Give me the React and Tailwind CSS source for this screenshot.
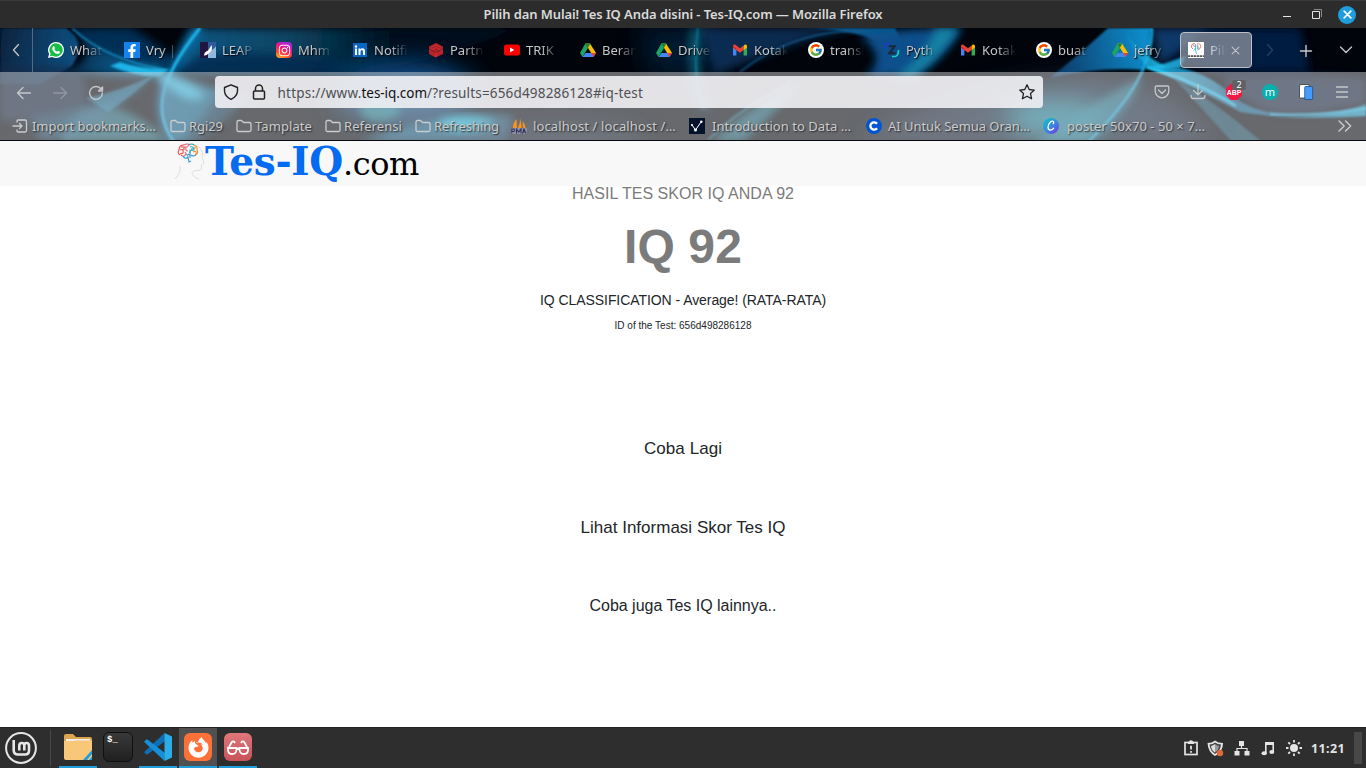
import React, { useLayoutEffect, useRef, useState } from "react";
import { FcGoogle } from "react-icons/fc";
import { FaInstagram, FaFacebookF, FaFirefoxBrowser } from "react-icons/fa";

/* Text whose letter spacing is adjusted so that it fills a given width. */
function Fit({ w, className = "", children }) {
  const ref = useRef(null);
  const [gap, setGap] = useState(0);
  useLayoutEffect(() => {
    const natural = ref.current.getBoundingClientRect().width;
    setGap((w - natural) / String(children).length);
  }, [w, children]);
  return (
    <span ref={ref} className={"inline-block shrink-0 whitespace-pre " + className} style={{ letterSpacing: gap + "px" }}>
      {children}
    </span>
  );
}

function ThemeArt() {
  return (
    <svg className="absolute inset-0 h-full w-full" viewBox="0 28 1366 112" preserveAspectRatio="none">
      <defs>
        <filter id="b1" x="-20%" y="-20%" width="140%" height="140%"><feGaussianBlur stdDeviation="1" /></filter>
        <filter id="b3" x="-30%" y="-30%" width="160%" height="160%"><feGaussianBlur stdDeviation="4" /></filter>
        <filter id="b12" x="-60%" y="-60%" width="220%" height="220%"><feGaussianBlur stdDeviation="13" /></filter>
        <linearGradient id="disc" x1="0" x2="1" y1="0" y2="0.2"><stop offset="0" stopColor="#06223d" /><stop offset="1" stopColor="#124f80" /></linearGradient>
        <linearGradient id="swoosh" gradientUnits="userSpaceOnUse" x1="75" x2="165" y1="30" y2="72"><stop offset="0" stopColor="#06345c" /><stop offset=".6" stopColor="#0f7cbd" /><stop offset="1" stopColor="#25c8fa" /></linearGradient>
        <linearGradient id="fade" gradientUnits="userSpaceOnUse" x1="190" x2="400" y1="28" y2="28"><stop offset="0" stopColor="#0b5580" /><stop offset=".5" stopColor="#08425f" /><stop offset="1" stopColor="#020c1a" /></linearGradient>
        <linearGradient id="beam" gradientUnits="userSpaceOnUse" x1="1120" x2="1366" y1="40" y2="110"><stop offset="0" stopColor="#087cba" /><stop offset=".18" stopColor="#24c6f6" /><stop offset=".5" stopColor="#166a9c" /><stop offset="1" stopColor="#1cb4e8" /></linearGradient>
        <linearGradient id="pane" gradientUnits="userSpaceOnUse" x1="1060" x2="1150" y1="60" y2="40"><stop offset="0" stopColor="#08406f" /><stop offset="1" stopColor="#0a90cf" /></linearGradient>
      </defs>
      <rect y="28" width="1366" height="112" fill="#01040b" />
      <path d="M0 28H66Q88 42 72 66L40 84H0Z" fill="url(#disc)" filter="url(#b1)" />
      <path d="M0 66H70Q92 80 86 110Q50 125 0 120Z" fill="#132c4c" opacity=".7" filter="url(#b3)" />
      <path d="M190 28H520Q420 68 340 75Q250 74 172 72Z" fill="url(#fade)" filter="url(#b3)" />
      <path d="M200 55Q270 50 340 62V74H175Z" fill="#06254e" opacity=".8" filter="url(#b3)" />
      <path d="M80 28H132Q158 44 182 66L160 70Q105 62 72 28Z" fill="#062d55" filter="url(#b3)" />
      <path d="M75 28Q105 60 165 68L158 75Q120 78 60 72Q88 66 86 50Z" fill="url(#swoosh)" opacity=".7" filter="url(#b3)" />
      <path d="M72 28Q106 60 166 70" stroke="#139ad5" strokeWidth="1.6" fill="none" filter="url(#b1)" />
      <path d="M120 62Q142 70 170 69L160 76Q140 78 110 66Z" fill="#22c4f8" opacity=".85" filter="url(#b1)" />
      <path d="M200 28Q168 68 163 96Q159 120 174 142" stroke="#0c80c0" strokeWidth="9" opacity=".65" fill="none" filter="url(#b3)" />
      <path d="M200 28Q168 68 163 96Q159 120 174 142" stroke="#1fb8ee" strokeWidth="3" fill="none" filter="url(#b1)" />
      <path d="M158 73Q195 80 222 92Q205 118 184 142H174Q158 115 162 92Z" fill="#1583b8" opacity=".75" filter="url(#b3)" />
      <path d="M152 71Q186 78 206 96Q190 106 170 88Z" fill="#37d3ff" opacity=".8" filter="url(#b3)" />
      <path d="M215 88 250 95 225 120 195 142H182Z" fill="#105783" opacity=".55" filter="url(#b3)" />
      <path d="M62 142Q60 112 106 106Q140 112 168 142Z" fill="#227d94" opacity=".75" filter="url(#b3)" />
      <path d="M30 118Q90 112 155 75Q120 108 70 140H40Z" fill="#1b5c86" opacity=".6" filter="url(#b3)" />
      <path d="M86 98Q125 90 156 74Q132 96 108 112Z" fill="#1e83b4" opacity=".6" filter="url(#b1)" />
      <ellipse cx="405" cy="92" rx="70" ry="30" fill="#0b5ba3" opacity=".85" filter="url(#b12)" />
      <ellipse cx="380" cy="109" rx="20" ry="12" fill="#1d8a9a" opacity=".8" filter="url(#b3)" />
      <path d="M360 142Q450 106 512 116Q510 138 500 142Z" fill="#1276a8" opacity=".7" filter="url(#b3)" />
      <ellipse cx="466" cy="124" rx="28" ry="7" fill="#20d9ff" opacity=".85" filter="url(#b3)" />
      <ellipse cx="555" cy="142" rx="90" ry="22" fill="#1a2f48" opacity=".6" filter="url(#b12)" />
      <path d="M640 28H720V74H650Z" fill="#04213c" opacity=".8" filter="url(#b12)" />
      <path d="M690 28H705Q693 75 710 107Q704 113 699 107Q685 72 690 28Z" fill="#127d97" opacity=".55" filter="url(#b3)" />
      <path d="M698 28Q692 75 703 108" fill="none" stroke="#1190aa" strokeWidth="2.5" opacity=".55" filter="url(#b1)" />
      <path d="M700 28H895Q850 26 800 42Q760 58 715 74Z" fill="#07335c" opacity=".85" filter="url(#b3)" />
      <path d="M795 28H895Q905 45 900 60Q880 28 795 28Z" fill="#0e6cab" opacity=".8" filter="url(#b1)" />
      <path d="M740 72Q790 32 855 31Q895 32 910 66" stroke="#125b90" strokeWidth="2" opacity=".8" fill="none" filter="url(#b1)" />
      <path d="M860 36Q905 28 962 28Q944 60 915 76H865Q890 58 860 36Z" fill="#07508c" filter="url(#b3)" />
      <path d="M936 28H959Q940 58 912 78H894Q926 56 936 28Z" fill="#128ba8" opacity=".85" filter="url(#b3)" />
      <path d="M712 142Q745 108 800 84Q778 110 742 142Z" fill="#1e7894" opacity=".75" filter="url(#b3)" />
      <path d="M708 140Q740 108 790 84" stroke="#2e9dc0" strokeWidth="2" opacity=".5" fill="none" filter="url(#b1)" />
      <path d="M860 142Q930 88 1100 75Q1190 95 1215 142Z" fill="#21385c" opacity=".65" filter="url(#b12)" />
      <path d="M1108 28H1152Q1151 54 1144 70Q1100 66 1050 78Q1080 54 1108 28Z" fill="url(#pane)" filter="url(#b1)" />
      <path d="M1152 28H1215Q1185 48 1160 66Z" fill="#073768" filter="url(#b3)" />
      <ellipse cx="1055" cy="118" rx="50" ry="18" fill="#1f8ea6" filter="url(#b12)" />
      <path d="M1035 142Q1080 112 1142 76Q1130 112 1088 142Z" fill="#238fab" opacity=".65" filter="url(#b3)" />
      <path d="M1152 28Q1154 78 1088 142" stroke="#1cb9ed" strokeWidth="2.4" opacity=".85" fill="none" filter="url(#b1)" />
      <path d="M1122 28Q1142 55 1165 66Q1205 68 1235 98Q1262 117 1310 115Q1345 112 1366 104V116Q1295 121 1240 112Q1190 84 1148 68Q1134 52 1122 28Z" fill="url(#beam)" opacity=".85" filter="url(#b1)" />
      <path d="M1146 67Q1200 83 1236 106" stroke="#2acfff" strokeWidth="2.5" fill="none" filter="url(#b1)" />
      <path d="M1270 114Q1330 116 1366 108" stroke="#2acfff" strokeWidth="2.5" fill="none" filter="url(#b1)" />
      <path d="M1222 76Q1300 72 1366 78V104Q1310 116 1275 113Q1240 104 1222 76Z" fill="#14284a" opacity=".8" filter="url(#b3)" />
      <path d="M1172 76Q1215 102 1262 142H1232Q1198 104 1172 76Z" fill="#156080" opacity=".65" filter="url(#b1)" />
      <path d="M1212 28H1300L1310 72H1215Q1185 64 1160 66Q1190 55 1212 28Z" fill="#042350" opacity=".8" filter="url(#b3)" />
      <path d="M1150 68Q1170 62 1186 56L1180 68Z" fill="#22bdf1" opacity=".8" filter="url(#b1)" />
    </svg>
  );
}

const Drive = () => (
  <svg className="h-4 w-4" viewBox="0 0 16 16">
    <path d="M5.3 1.5H10L16 11H11.2Z" fill="#fbbc04" />
    <path d="M5.3 1.5 8 6 2.5 15 0 11Z" fill="#1ea362" />
    <path d="M5.5 11H16L13.5 15H2.5Z" fill="#4285f4" />
    <path d="M11.2 11H16L13.5 15Z" fill="#ea4335" />
    <path d="M5.3 1.5H10.3L8 5.8Z" fill="#188038" />
  </svg>
);
const Gmail = () => (
  <svg className="h-4 w-4" viewBox="0 0 16 16">
    <path d="M1 4V13.5H4.4V7Z" fill="#4285f4" />
    <path d="M15 4V13.5H11.6V7Z" fill="#34a853" />
    <path d="M1 4.2Q1 2 3 2.5L8 6.3 11.6 3.6V8L8 10.8 1 5.7Z" fill="#ea4335" />
    <path d="M11.6 3.7 13 2.6Q15 2 15 4.4V5.6L11.6 8.1Z" fill="#fbbc04" />
    <path d="M1 4.2 4.4 6.7V8L1 5.6Z" fill="#c5221f" />
  </svg>
);
const Google = () => <span className="flex h-4 w-4 items-center justify-center rounded-full bg-white"><FcGoogle size={14} /></span>;
const WhatsApp = () => (
  <svg className="h-4 w-4" viewBox="0 0 16 16">
    <path d="M8 0A8 8 0 0 1 8 16Q6 16 4.2 15.1L0 16 1.1 12A8 8 0 0 1 8 0Z" fill="#fff" />
    <path d="M8 1.3A6.7 6.7 0 1 1 4.5 13.7L1.9 14.3 2.6 11.8A6.7 6.7 0 0 1 8 1.3Z" fill="#16bd47" />
    <path d="M5 4.4Q5.9 3.6 6.3 4.5L6.9 6Q6.9 6.4 6.3 7 7.4 9 9.2 9.7L10 8.8 12 9.8Q12 12 9.8 12 7.6 11.8 5.8 9.9 3.2 7 5 4.4Z" fill="#fff" />
  </svg>
);
const Facebook = () => <span className="flex h-4 w-4 items-end justify-center bg-[#1583ed] text-white"><FaFacebookF size={14} /></span>;
const Leap = () => (
  <svg className="h-4 w-4" viewBox="0 0 16 16">
    <rect width="9" height="16" rx="1" fill="#211641" /><path d="M8 0H16V16H8Z" fill="#2c5a9a" />
    <path d="M8 9Q14 8 16 4V16H8Z" fill="#8db9de" /><path d="M4 13.5Q4 10 8 8.5 10 6 11.5 3 13.5 8 8.5 11.5 6.5 14 4 13.5Z" fill="#fff" />
  </svg>
);
const Instagram = () => <span className="flex h-4 w-4 items-center justify-center rounded bg-[linear-gradient(25deg,#ffcb22_0%,#ff4b24_28%,#f21383_58%,#a926dd_85%)] text-white"><FaInstagram size={13} /></span>;
const LinkedIn = () => (
  <svg className="h-4 w-4" viewBox="0 0 16 16">
    <rect x="1" y="1" width="14" height="14" fill="#0a66c2" />
    <circle cx="4" cy="4.5" r="1.2" fill="#fff" />
    <path d="M3 6.5H5V13H3ZM6.5 6.5H8.4V7.5Q9 6.3 10.6 6.3 13 6.3 13 9.4V13H11V9.8Q11 8 9.9 8 8.5 8 8.5 10V13H6.5Z" fill="#fff" />
  </svg>
);
const Cubes = () => (
  <svg className="h-4 w-4" viewBox="0 0 16 16">
    <path d="M8 1 15 4.5V12L7.5 15.5 1 12V4.5Z" fill="#b92227" />
    <path d="M1 5 8 1 15 5 8 8Z" fill="#a31b25" />
    <path d="M3 5.2 8 3 13 5.4M1 9 8 5.5 15 9M8 9V15" stroke="#d9383b" strokeWidth=".9" fill="none" />
    <path d="M1 7.3 7.5 10.2 15 7" stroke="#5d1520" strokeWidth=".7" fill="none" />
  </svg>
);
const YouTube = () => (
  <svg className="h-4 w-4" viewBox="0 0 16 16"><rect y="2.4" width="16" height="11.2" rx="2.6" fill="#f00" /><path d="M6 5.6V10.2L10.4 7.9Z" fill="#fff" /></svg>
);
const Zed = () => (
  <svg className="h-4 w-4" viewBox="0 0 16 16" fill="none">
    <path d="M1 6Q1 1 6 1" stroke="#2238d8" strokeWidth="1.6" /><path d="M8 14.5H11Q14.5 14 14.5 8" stroke="#10d5c0" strokeWidth="1.6" />
    <path d="M4.8 4.3H10.8L5.2 11.3H11.5" stroke="#1c2838" strokeWidth="2" />
  </svg>
);
const BrainIcon = () => (
  <svg className="h-4 w-4" viewBox="0 0 16 16" fill="none">
    <rect width="16" height="16" fill="#fff" />
    <g strokeWidth="1">
      <path d="M7 1.6Q4 1 3.5 4 3.2 6 5 7M5 3.5 7 4.5" stroke="#e6736d" />
      <path d="M7.6 2V8.5Q8 11 9 12M7.6 6 5.5 8.5" stroke="#4ab9dc" />
      <path d="M9 2Q12.5 1 12.8 4.2 12.7 7 9.5 8M9 4 11 5.5" stroke="#ee8270" />
      <path d="M9.3 2.5V7L11.5 6.8" stroke="#62bdd2" />
    </g>
    <path d="M0 14.2H16" stroke="#555" strokeWidth="1.7" strokeDasharray="2.4 .6" />
  </svg>
);

const tabs = [
  [WhatsApp, "What"], [Facebook, "Vry |"], [Leap, "LEAP"], [Instagram, "Mhm"], [LinkedIn, "Notifi"], [Cubes, "Partn"],
  [YouTube, "TRIK"], [Drive, "Beran"], [Drive, "Drive"], [Gmail, "Kotak"], [Google, "transl"], [Zed, "Pyth"],
  [Gmail, "Kotak"], [Google, "buat"], [Drive, "jefry"],
];

const Line = ({ d, className = "h-4 w-4", w = 1.3 }) => (
  <svg className={"shrink-0 " + className} viewBox="0 0 16 16" fill="none" stroke="currentColor" strokeWidth={w} strokeLinecap="round" strokeLinejoin="round"><path d={d} /></svg>
);
const ImportIcon = () => <Line d="M5 4V3Q5 2 6 2H13Q14.5 2 14.5 3.5V12.5Q14.5 14 13 14H6Q5 14 5 13V12M1 8H10M7.5 5.5 10 8 7.5 10.5" />;
const Folder = () => <Line d="M1 4Q1 2.5 2.5 2.5H5.5L7.5 4.5H13.5Q15 4.5 15 6V12Q15 13.5 13.5 13.5H2.5Q1 13.5 1 12Z" />;
const Pma = () => (
  <svg className="h-4 w-4 shrink-0" viewBox="0 0 16 16">
    <path d="M5.5 1Q1.5 5 2 10H6ZM9 0Q9.5 5 7 10H11ZM11.5 3Q14.5 6 14.5 10H12Z" fill="#f79421" />
    <path d="M0 10H16V16H0Z" fill="#c6cad7" opacity=".35" />
    <path d="M.8 15.5V11H3Q4 12.2 3 13.5H1M5.5 15.5V11L7.8 14 10 11V15.5M11.5 15.5 13 11 15 15.5M12 14H14.5" stroke="#343464" strokeWidth="1.1" fill="none" />
  </svg>
);
const Graph = () => (
  <svg className="h-4 w-4 shrink-0" viewBox="0 0 16 16"><rect width="16" height="16" fill="#05122b" /><path d="M3 7 6.5 12 12 4" stroke="#fff" fill="none" /><circle cx="3" cy="7" r="1.1" fill="#fff" /><circle cx="6.5" cy="12" r="1.5" fill="#fff" /><circle cx="12.3" cy="3.8" r="1.3" fill="#fff" /></svg>
);
const CircleC = () => (
  <svg className="h-4 w-4 shrink-0" viewBox="0 0 16 16"><circle cx="8" cy="8" r="8" fill="#0056d2" /><path d="M11 5.7A3.7 3.7 0 1 0 11 10.3" stroke="#fff" strokeWidth="2.3" fill="none" /></svg>
);
const Canva = () => (
  <svg className="h-4 w-4 shrink-0" viewBox="0 0 16 16"><defs><linearGradient id="cv" x1="0" y1="0" x2="1" y2="1"><stop stopColor="#05c8cb" /><stop offset=".55" stopColor="#3e85dc" /><stop offset="1" stopColor="#7d2ae8" /></linearGradient></defs><circle cx="8" cy="8" r="8" fill="url(#cv)" /><path d="M9.9 6.1Q11.2 5 10.5 3.6 9.2 2.6 7.2 4.2 4.8 6.4 5 9.4 5.2 12.2 7.6 12.1 9.5 11.9 10.9 9.8" stroke="#fff" strokeWidth="1.3" fill="none" /></svg>
);

const bookmarks = [
  [ImportIcon, "Import bookmarks…", "w-[158px] gap-1", 124],
  [Folder, "Rgi29", "w-[66px] gap-[3px]", 34],
  [Folder, "Tamplate", "w-[89px] gap-[3px]", 57],
  [Folder, "Referensi", "w-[90px] gap-[3px]", 58],
  [Folder, "Refreshing", "w-[96px] gap-[3px]", 65],
  [Pma, "localhost / localhost /…", "w-[178px] gap-[6px]", 143],
  [Graph, "Introduction to Data …", "w-[177px] gap-[7px]", 139],
  [CircleC, "AI Untuk Semua Oran…", "w-[177px] gap-[6px]", 142],
  [Canva, "poster 50x70 - 50 × 7…", "w-[170px] gap-2", 138],
];

function TitleBar() {
  return (
    <div className="grid h-7 grid-cols-[1fr_auto_1fr] items-center border-t border-[#3b3b3b] bg-[#2c2c2c] font-['Noto_Sans',sans-serif]">
      <span />
      <Fit w={399} className="text-[13px] font-semibold text-[#dadada]">Pilih dan Mulai! Tes IQ Anda disini - Tes-IQ.com — Mozilla Firefox</Fit>
      <div className="flex items-center justify-end pr-[10px] text-[#e5e5e5]">
        <span className="mt-[3px] mr-[-1px] h-px w-2 bg-[#e5e5e5]" />
        <svg className="ml-[21px] h-[11px] w-[11px]" viewBox="0 0 11 11" fill="none" stroke="currentColor"><path d="M1.5 2.5H8.5V9.5H1.5Z" strokeWidth="1" /><path d="M3 .5H10.5V8" stroke="#8a8a8a" /></svg>
        <span className="ml-4 flex h-[18px] w-[18px] items-center justify-center rounded-full bg-[#1f9ede] text-white"><Line d="M2 2 14 14M14 2 2 14" w={2.8} className="h-[9px] w-[9px]" /></span>
      </div>
    </div>
  );
}

function TabStrip() {
  return (
    <div className="flex h-11 items-center text-[13px] text-[#c5c7c9]">
      <div className="flex h-full w-[33px] items-center justify-center border-r border-[#506c83]"><Line d="M10.5 2.5 5.5 8 10.5 13.5" /></div>
      <div className="flex pl-[5px]">
        {tabs.map(([Icon, label], i) => (
          <div key={i} className="flex h-9 w-[76px] items-center gap-[6px] pl-[10px]">
            <span className="h-4 w-4 shrink-0"><Icon /></span>
            <span className="w-[34px] pt-px whitespace-nowrap [text-shadow:1px_1px_1.5px_#000] [mask-image:linear-gradient(to_right,black_45%,transparent_100%)]">{label}</span>
          </div>
        ))}
        <div className="ml-[2px] flex h-9 w-[72px] items-center gap-[6px] rounded border border-[#bcbfc5] bg-[#a3a6ae]/65 pl-[7px]">
          <span className="h-4 w-4 shrink-0"><BrainIcon /></span>
          <span className="w-[17px] pt-px whitespace-nowrap text-[#d4d9df] [mask-image:linear-gradient(to_right,black,transparent)]">Pili</span>
          <Line d="M2 2 14 14M14 2 2 14" w={1.8} className="-ml-[2px] h-[9px] w-[9px]" />
        </div>
      </div>
      <div className="flex grow items-center pl-[10px]">
        <Line d="M5.5 2.5 10.5 8 5.5 13.5" className="h-4 w-4 text-[#284061]" />
        <Line d="M8 2.5V13.5M2.5 8H13.5" className="mt-px ml-[20px] h-4 w-4" w={1.4} />
        <Line d="M2.5 5 8 10.5 13.5 5" className="ml-6 h-4 w-4" w={1.4} />
      </div>
    </div>
  );
}

function NavBar() {
  return (
    <div className="flex h-10 items-center text-[#c6c8cb]">
      <div className="flex w-[215px] shrink-0 items-center pt-px pl-4">
        <Line d="M14.5 8H1.5M7 2.5 1.5 8 7 13.5" />
        <Line d="M1.5 8H14.5M9 2.5 14.5 8 9 13.5" className="ml-5 h-4 w-4 opacity-40" />
        <Line d="M13.2 4.2A6.4 6.4 0 1 0 14.4 8M14.5 2V6H10.5Z" className="ml-5 h-4 w-4" w={1.4} />
      </div>
      <div className="flex h-8 w-[828px] shrink-0 items-center rounded bg-[#f1f1f4]/90 pl-2 text-[#222]">
        <Line d="M8 .8 14.5 3.5V7Q14.2 12.5 8 15.4 1.8 12.5 1.5 7V3.5Z" w={1.4} />
        <svg className="ml-3 h-4 w-4" viewBox="0 0 16 16" fill="none" stroke="currentColor" strokeWidth="1.5"><rect x="2.5" y="7" width="11" height="8" rx="1" /><path d="M4.5 7V4.5A3.5 3.5 0 0 1 11.5 4.5V7" /></svg>
        <div className="ml-[10.5px] flex pt-0.5 text-[13.5px] text-[#4f4f53]">
          <Fit w={84}>https://www.</Fit>
          <Fit w={65.5} className="text-[#111]">tes-iq.com</Fit>
          <Fit w={216}>/?results=656d498286128#iq-test</Fit>
        </div>
        <Line d="M8 .8 10.2 5.5 15.3 6.1 11.5 9.6 12.6 14.8 8 12.2 3.4 14.8 4.5 9.6 .7 6.1 5.8 5.5Z" className="mr-2 ml-auto h-4 w-4" w={1.3} />
      </div>
      <div className="flex grow items-center pl-[111px]">
        <Line d="M1.2 3Q1.2 2 2.5 2H13.5Q14.8 2 14.8 3V7A6.8 6.8 0 0 1 1.2 7ZM4.5 6 8 9.5 11.5 6" w={1.3} />
        <Line d="M8 0V10.5M3.5 6.5 8 10.8 12.5 6.5M1 11.5Q1 14.5 3 14.5H13Q15 14.5 15 11.5" className="ml-5 h-4 w-4" w={1.3} />
        <span className="ml-5 grid h-4 w-4">
          <svg className="h-4 w-4 overflow-visible" viewBox="0 0 16 16">
            <path d="M4.7 0H11.3L16 4.7V11.3L11.3 16H4.7L0 11.3V4.7Z" fill="#ee1944" />
            <text x="0.7" y="11.2" className="font-['Liberation_Sans',sans-serif] text-[7.5px] font-bold" fill="#fff" textLength="14.6" lengthAdjust="spacingAndGlyphs">ABP</text>
            <rect x="6.3" y="-4" width="13.5" height="10" rx="1.5" fill="#606164" />
            <text x="10.6" y="4.2" className="text-[9px]" fill="#fff">2</text>
          </svg>
        </span>
        <span className="ml-5 flex h-4 w-4 items-center justify-center rounded-full bg-[#06b0ad] pb-[2px] text-[11px] leading-none text-white">m</span>
        <svg className="ml-5 h-4 w-4" viewBox="0 0 16 16"><path d="M1.5 2Q1.5 .5 3 .5H11V3H8V14H2Q1.5 14 1.5 13Z" fill="#fff" stroke="#30384a" strokeWidth=".8" /><rect x="6.7" y="2.5" width="8" height="13" rx="1" fill="#459cff" stroke="#11447e" strokeWidth=".7" /></svg>
        <Line d="M2.5 3H13.5M2.5 8H13.5M2.5 13H13.5" className="ml-5 h-4 w-4" w={1.3} />
      </div>
    </div>
  );
}

function BookmarksBar() {
  return (
    <div className="flex h-7 items-center pl-3 text-[13px] text-[#cbccce] [text-shadow:1px_1px_1.5px_#292b2d]">
      {bookmarks.map(([Icon, label, layout, textWidth], i) => (
        <div key={i} className={"flex shrink-0 items-center " + layout}>
          <Icon /><Fit w={textWidth} className="pt-px">{label}</Fit>
        </div>
      ))}
      <Line d="M2 3 7.2 8 2 13M8.5 3 13.7 8 8.5 13" className="mr-[13px] ml-auto h-4 w-4" w={1.4} />
    </div>
  );
}

function Head() {
  return (
    <svg className="h-[38px] w-[34px] shrink-0" viewBox="0 0 34 38" fill="none">
      <path d="M2 36Q8 30 7 23M26 4Q31 9 29 14L31 20 28.5 22V26Q27 28 22 27.5 18 29 19 31 21 35 26 36" stroke="#dedede" />
      <path d="M8 2.5Q16-1.5 26 4" stroke="#dedede" />
      <g strokeWidth="1.1">
        <path d="M11 2Q6 2 6 7 4 10 7 12M7 7Q11 5 10 10L7 11M8 4H11V7" stroke="#e94b47" />
        <path d="M11 2Q15 0 16 2 14 5 11 4M13 4Q12 8 15 8M8 12Q11 15 13 11M12 9 14 12" stroke="#e8647e" />
        <path d="M16 2Q19 0 21 2M17 4Q21 3 21 7H17V10M19 5V8" stroke="#2aa9ae" />
        <path d="M21 2Q25 4 24 7 26 11 22 12M20 9Q24 7 23 11M22 4V6" stroke="#f38b35" />
        <path d="M10 13Q12 17 15 14L16 19 18 18M17 12Q14 10 15 14M18 12Q20 14 23 12M17 8V15" stroke="#2e9dd1" />
      </g>
    </svg>
  );
}

function Page() {
  return (
    <main className="flex h-[586px] flex-col bg-white font-['Liberation_Sans',Arial,sans-serif] text-[#222529]">
      <header className="flex h-[45px] shrink-0 items-start bg-[#f8f8f9] pt-[2px] pl-[173px]">
        <Head />
        <div className="-mt-px -ml-[2px] flex items-baseline font-['DejaVu_Serif',serif] leading-[38px]">
          <Fit w={138} className="text-[39px] font-bold text-[#056bf0]">Tes-IQ</Fit>
          <Fit w={76} className="text-[32px] text-black">.com</Fit>
        </div>
      </header>
      <div className="flex flex-col items-center">
        <Fit w={222} className="h-[31px] text-[16px] leading-[15px] text-[#7b7b7b]">HASIL TES SKOR IQ ANDA 92</Fit>
        <Fit w={118} className="h-[73px] text-[48px] leading-[60px] font-bold text-[#7b7b7b]">IQ 92</Fit>
        <Fit w={286} className="h-[27px] text-[14px] leading-5">IQ CLASSIFICATION - Average! (RATA-RATA)</Fit>
        <Fit w={137} className="h-[119px] text-[10px] leading-[18px]">ID of the Test: 656d498286128</Fit>
        <Fit w={78} className="h-[79px] text-[17px] leading-[26px]">Coba Lagi</Fit>
        <Fit w={205} className="h-[79px] text-[17px] leading-[26px]">Lihat Informasi Skor Tes IQ</Fit>
        <Fit w={187} className="text-[16px] leading-6">Coba juga Tes IQ lainnya..</Fit>
      </div>
    </main>
  );
}

const Slot = ({ active, running = true, children }) => (
  <div className={"flex h-10 w-[38px] items-center justify-center border-b-2 " + (running ? "border-[#1f9ede] " : "border-transparent ") + (active ? "bg-[#505050]" : "")}>{children}</div>
);

function Taskbar() {
  return (
    <footer className="flex h-[41px] items-center border-t border-[#222] bg-[#2e2e2e] text-[#e4e4e4]">
      <svg className="ml-[5px] h-8 w-8" viewBox="0 0 32 32" fill="none" stroke="#e7e7e7">
        <circle cx="16" cy="16" r="14.9" strokeWidth="2" /><path d="M8.7 8V18.5Q9 22.5 13 22.5H20Q24 22.5 24 18.5V13.5Q24 11 21.5 11 19.3 11 19.3 13.5V18.5M19.3 13.5Q19.3 11 16.8 11 14.3 11 14.3 13.5V18.5" strokeWidth="2.6" />
      </svg>
      <span className="ml-[13px] h-9 w-px bg-[#484848]" />
      <div className="ml-2 flex gap-[2px]">
        <Slot>
          <svg className="h-7 w-7" viewBox="0 0 28 28"><path d="M0 3Q0 1 2 1H9L12 4H26Q28 4 28 6V15H0Z" fill="#dda64e" /><path d="M2 6H26V12H2Z" fill="#eee" /><path d="M0 8H9L12 7.5H28V25Q28 27 26 27H2Q0 27 0 25Z" fill="#f9c778" /><path d="M19 27 28 17V21L23 27ZM25 27 28 23.5V27Z" fill="#1f9ede" /></svg>
        </Slot>
        <Slot running={false}>
          <span className="h-[30px] w-[30px] rounded-md border border-[#101010] bg-[linear-gradient(#393939,#202020)] pt-[1px] pl-[3px] font-['Liberation_Mono',monospace] text-[9px] leading-3 font-bold text-white">$_</span>
        </Slot>
        <Slot>
          <svg className="h-7 w-7" viewBox="0 0 28 28"><path d="M20.5 0 21 8 3.5 21.5 2.5 21.5 0 19.2Z" fill="#0e6fb4" /><path d="M2.5 6.5H3.5L21 20 20.5 28 0 8.8Z" fill="#168fd6" /><path d="M20.5 0 28 3.5V24.5L20.5 28Z" fill="#2badea" /></svg>
        </Slot>
        <Slot active>
          <span className="flex h-7 w-7 items-center justify-center rounded-md bg-[#fd7139] text-white"><FaFirefoxBrowser size={21} /></span>
        </Slot>
        <Slot>
          <span className="flex h-7 w-7 items-center justify-center rounded-md bg-[linear-gradient(#df777a,#c75358)]">
            <svg className="h-6 w-6" viewBox="0 0 24 24" fill="none" stroke="#fff" strokeWidth="1.8"><path d="M2 13H10.5V15Q10 19 6.2 19 2 19 2 15ZM13.5 13H22V15Q22 19 17.8 19 14 19 13.5 15ZM10.5 14.5Q12 13 13.5 14.5M2 14 5.5 7.5Q7.5 5 9 8M22 14 18.5 7.5Q16.5 5 15 8" /></svg>
          </span>
        </Slot>
      </div>
      <div className="ml-auto flex items-center">
        <svg className="mr-[-1px] h-4 w-4" viewBox="0 0 16 16" fill="none" stroke="currentColor"><rect x="2" y="2.5" width="12" height="12" strokeWidth="1.7" /><path d="M5 2.5Q8-2 11 2.5V4H5Z" fill="currentColor" stroke="none" /><path d="M8 5.7V9.5M8 11V12.7" strokeWidth="1.8" /></svg>
        <svg className="ml-[9px] h-[17px] w-[17px]" viewBox="0 0 17 17"><path d="M8 .5Q11 3 16 3 16 12 8 16 1 12 .5 3 5 3 8 .5Z" fill="#e5e5e5" /><path d="M8 2.5Q11 4.5 14 4.6 13.5 11 8 14 3 11 2.5 4.6 6 4.5 8 2.5Z" fill="#454545" /><path d="M8 4V12.5Q4.3 10 4 6Q6.5 5.5 8 4Z" fill="#ddd" /><path d="M8 4V12.5Q11.6 10 12 6Q9.5 5.5 8 4Z" fill="#999" /><circle cx="13" cy="13" r="3.2" fill="#dd6939" /></svg>
        <svg className="ml-[10px] h-4 w-4" viewBox="0 0 16 16" fill="currentColor"><path d="M5 1H10V6H5ZM.5 11H5.5V15.5H.5ZM10.5 11H15.5V15.5H10.5Z" /><path d="M7.5 5V8.5M3 11V8.5H13V11" fill="none" stroke="currentColor" strokeWidth="1.2" /></svg>
        <svg className="ml-[10px] h-4 w-4" viewBox="0 0 16 16" fill="currentColor"><path d="M5 2H14V12H12.4V5H6.6V14H5Z" /><ellipse cx="4.2" cy="13.2" rx="2.7" ry="2" /><ellipse cx="11.8" cy="12" rx="2.5" ry="2" /></svg>
        <svg className="ml-[10px] h-4 w-4" viewBox="0 0 16 16" stroke="currentColor" strokeWidth="1.8"><circle cx="8" cy="8" r="4" fill="currentColor" stroke="none" /><path d="M8 0V2.5M8 13.5V16M0 8H2.5M13.5 8H16M2.3 2.3 4 4M12 12 13.7 13.7M2.3 13.7 4 12M12 4 13.7 2.3" /></svg>
        <Fit w={34} className="ml-[9px] pt-0.5 font-['Noto_Sans',sans-serif] text-[12.5px] font-bold">11:21</Fit>
        <span className="mr-1 ml-[9px] h-8 w-2 bg-[#484848]" />
      </div>
    </footer>
  );
}

export default function App() {
  return (
    <div className="flex h-[768px] w-[1366px] flex-col overflow-hidden">
      <TitleBar />
      <div className="relative h-[113px] shrink-0 overflow-hidden border-b border-[#05080e] bg-black font-['Noto_Sans',sans-serif]">
        <ThemeArt />
        <div className="relative">
          <TabStrip />
          <div className="bg-[#d7d7d7]/48">
            <NavBar />
            <BookmarksBar />
          </div>
        </div>
      </div>
      <Page />
      <Taskbar />
    </div>
  );
}
